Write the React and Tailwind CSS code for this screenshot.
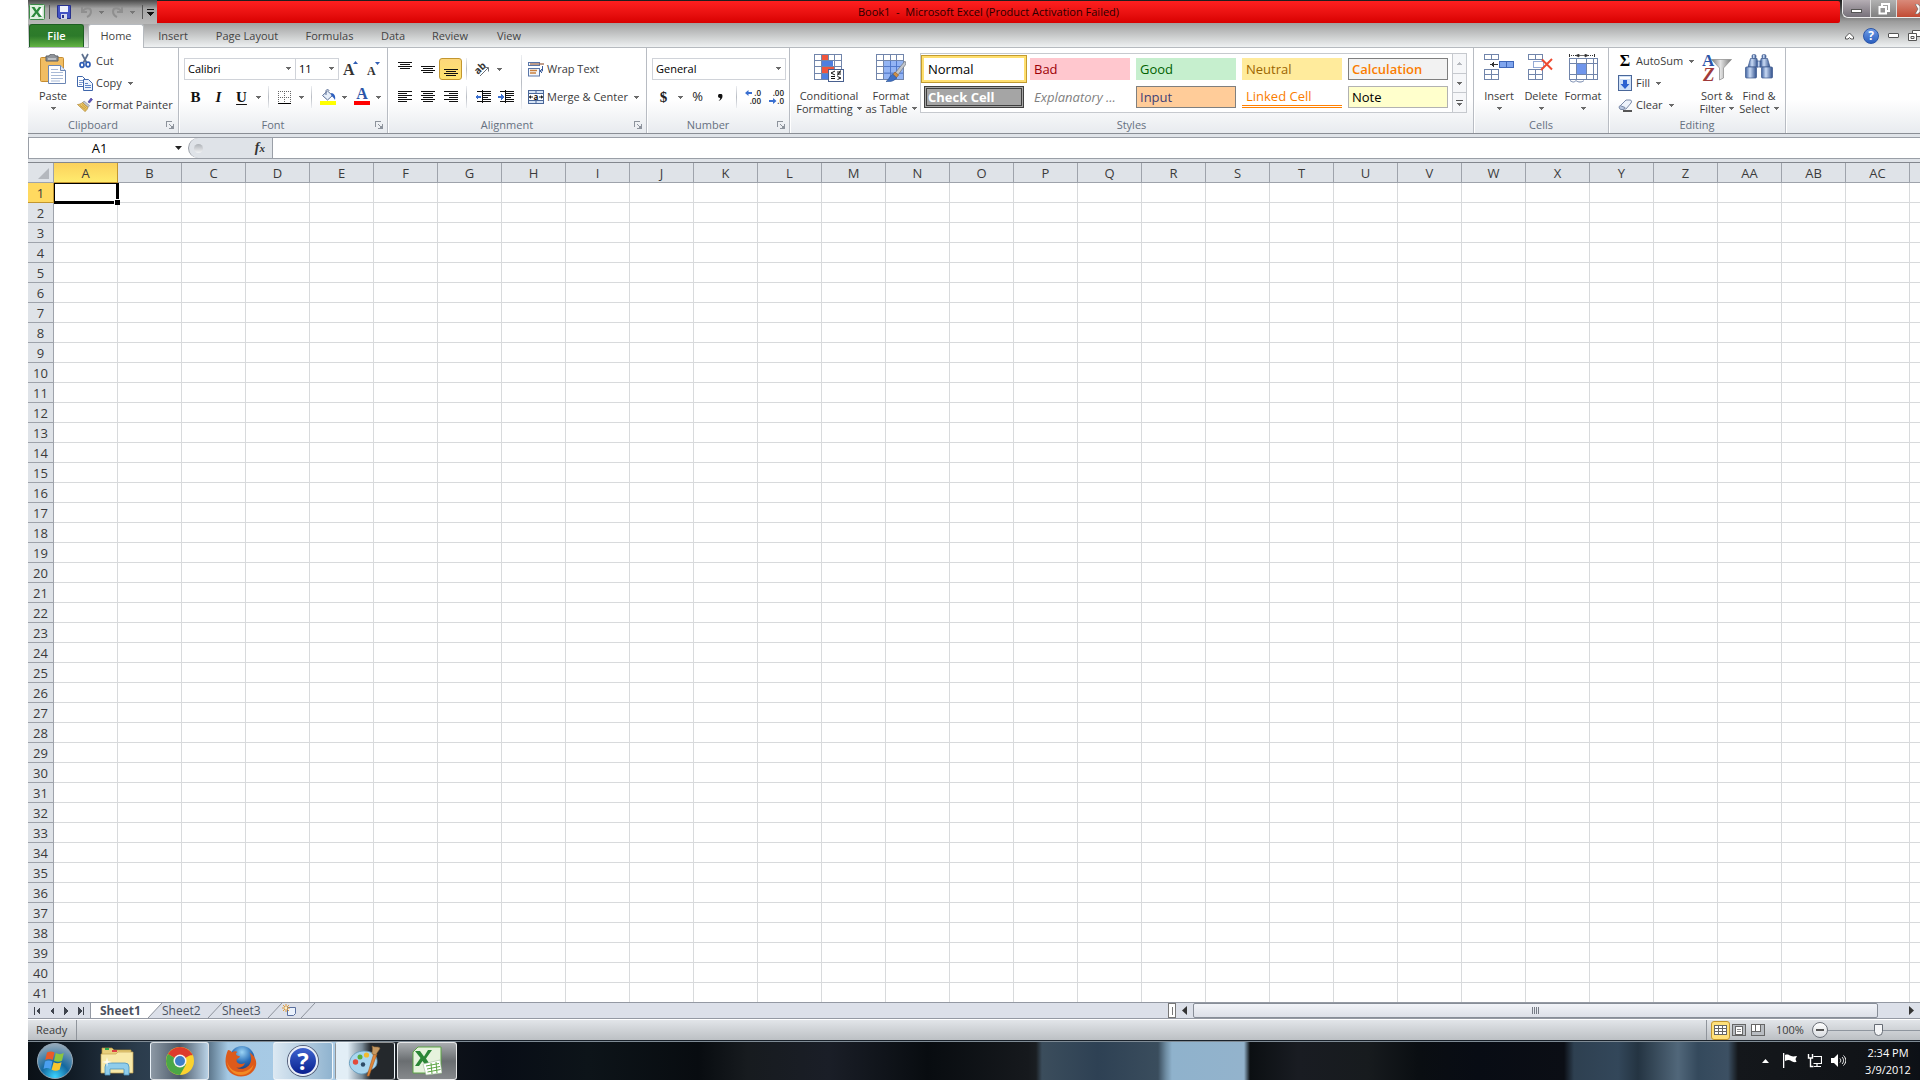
import clsx from 'clsx';

const columns = [
    'A', 'B', 'C', 'D', 'E', 'F', 'G', 'H', 'I', 'J', 'K', 'L', 'M', 'N', 'O',
    'P', 'Q', 'R', 'S', 'T', 'U', 'V', 'W', 'X', 'Y', 'Z', 'AA', 'AB', 'AC', '',
];
const rows = Array.from({ length: 41 }, (_, i) => i + 1);

const tabs = [
    { name: 'Insert', width: 'w-[58px]' },
    { name: 'Page Layout', width: 'w-[90px]' },
    { name: 'Formulas', width: 'w-[75px]' },
    { name: 'Data', width: 'w-[52px]' },
    { name: 'Review', width: 'w-[62px]' },
    { name: 'View', width: 'w-[56px]' },
];

const cellStyles = [
    { name: 'Normal', className: 'bg-white text-black shadow-[0_0_0_2px_#ffdf6f,0_0_0_3px_#c29b2f]' },
    { name: 'Bad', className: 'bg-[#ffc7ce] text-[#9c0006]' },
    { name: 'Good', className: 'bg-[#c6efce] text-[#006100]' },
    { name: 'Neutral', className: 'bg-[#ffeb9c] text-[#9c6500]' },
    { name: 'Calculation', className: 'bg-[#f2f2f2] font-semibold text-[#fa7d00] outline outline-[#7f7f7f] -outline-offset-1' },
    { name: 'Check Cell', className: 'bg-[#a5a5a5] font-bold text-white outline-[3px] outline-[#3f3f3f] outline-double -outline-offset-3' },
    { name: 'Explanatory ...', className: 'bg-white italic text-[#7f7f7f]' },
    { name: 'Input', className: 'bg-[#ffcc99] text-[#3f3f76] outline outline-[#7f7f7f] -outline-offset-1' },
    { name: 'Linked Cell', className: 'border-b-[3px] border-double border-[#ff8001] bg-white text-[#fa7d00]' },
    { name: 'Note', className: 'bg-[#ffffcc] text-black outline outline-[#b2b2b2] -outline-offset-1' },
];

/* ---------- small pieces ---------- */

function Arrow({ className = 'text-[#6a6a6a]' }) {
    return (
        <svg viewBox="0 0 5 3" className={clsx('h-[3px] w-[5px] shrink-0', className)} fill="currentColor" shapeRendering="crispEdges">
            <path d="M0 0h5L2.5 3z" />
        </svg>
    );
}

function Sep({ className = 'h-[22px]' }) {
    return <span className={clsx('mx-1 w-px shrink-0 bg-linear-to-b from-[#eceef1] via-[#b9bdc4] to-[#eceef1]', className)} />;
}

function Tool({ label, active, children }) {
    return (
        <button
            type="button"
            aria-label={label}
            className={clsx(
                'flex h-[22px] w-[23px] shrink-0 items-center justify-center',
                active && 'rounded-[3px] border border-[#c2962f] bg-linear-to-b from-[#fdd77a] to-[#ffe46e]',
            )}
        >
            {children}
        </button>
    );
}

function Drop({ label }) {
    return (
        <button type="button" aria-label={label} className="flex h-[22px] w-[11px] shrink-0 items-center justify-center">
            <Arrow />
        </button>
    );
}

function SmallButton({ icon, label, arrow }) {
    return (
        <button type="button" className="flex h-[22px] items-center gap-[3px] whitespace-nowrap">
            <span className="flex h-4 w-4 items-center justify-center">{icon}</span>
            <span>{label}</span>
            {arrow && <Arrow className="ml-[3px] text-[#6a6a6a]" />}
        </button>
    );
}

function BigButton({ icon, lines, className = 'w-[42px]' }) {
    return (
        <button type="button" className={clsx('flex shrink-0 flex-col items-center pt-[6px] leading-[13px]', className)}>
            <span className="mb-[3px] flex h-8 items-start justify-center">{icon}</span>
            <span className="whitespace-nowrap">{lines[0]}</span>
            <span className="flex h-[13px] items-center gap-1 whitespace-nowrap">
                {lines[1]}
                <Arrow />
            </span>
        </button>
    );
}

function Group({ title, launcher, className, children }) {
    return (
        <section aria-label={title} className={clsx('relative flex shrink-0 flex-col border-r border-[#b8bcc3] shadow-[1px_0_0_#fff]', className)}>
            <div className="flex h-[68px]">{children}</div>
            <div className={clsx('h-[17px] text-center leading-[17px] text-[#66707f]', launcher && 'pr-5')}>{title}</div>
            {launcher && (
                <button type="button" aria-label={`${title} options`} className="absolute right-1 bottom-1">
                    <svg viewBox="0 0 8 8" className="h-2 w-2" fill="none" stroke="#8d939c" shapeRendering="crispEdges">
                        <path d="M.5 6V.5H6M3 3l3 3M7.5 3v4.5H3" />
                        <path d="M5 5h2v2H5z" fill="#8d939c" />
                    </svg>
                </button>
            )}
        </section>
    );
}

function Combo({ label, value, className }) {
    return (
        <div className={clsx('relative h-[22px] shrink-0', className)}>
            <select aria-label={label} className="h-full w-full appearance-none border border-[#d0d3d9] bg-white pl-[3px] text-black">
                <option>{value}</option>
            </select>
            <Arrow className="pointer-events-none absolute top-[9px] right-[5px] text-[#6a6a6a]" />
        </div>
    );
}

/* ---------- ribbon icons ---------- */

function PasteIcon() {
    return (
        <svg viewBox="0 0 28 31" className="h-[31px] w-7">
            <rect x="1.5" y="3.5" width="23" height="24" rx="1" fill="#f1bd62" stroke="#c58d33" />
            <path d="M7 2h3c.5-2.5 6-2.5 6.5 0H19v5H7z" fill="#8f9399" stroke="#5d6167" />
            <path d="M9 5h8" stroke="#e8eaec" />
            <path d="M9.5 11.5h12l5 5v13h-17z" fill="#fff" stroke="#6b86b4" />
            <path d="M21.5 11.5v5h5" fill="#dbe6f5" stroke="#6b86b4" />
            <path d="M12 15.5h7M12 18.5h12M12 21.5h12M12 24.5h12M12 27h9" stroke="#a9bad6" />
        </svg>
    );
}

function CutIcon() {
    return (
        <svg viewBox="0 0 16 16" className="h-4 w-4" fill="none">
            <path d="M5 1l4.500 8.500M11 1L6.500 9.500" stroke="#5d708f" strokeWidth="1.700" />
            <ellipse cx="5" cy="12" rx="2" ry="2.300" stroke="#2f5db5" strokeWidth="1.700" />
            <ellipse cx="11" cy="11.500" rx="2" ry="2.300" stroke="#2f5db5" strokeWidth="1.700" />
        </svg>
    );
}

function CopyIcon() {
    return (
        <svg viewBox="0 0 16 16" className="h-4 w-4" fill="#fff" stroke="#3f66ab">
            <path d="M.5 1.500h5l3 3v7h-8z" />
            <path d="M2 5.500h4M2 7.500h4M2 9.500h3" stroke="#7d9bd0" />
            <path d="M6.500 4.500h5l4 4v7h-9z" fill="#eef4fd" />
            <path d="M8 8.500h3M8 10.500h6M8 12.500h6" stroke="#5c83c6" />
        </svg>
    );
}

function PainterIcon() {
    return (
        <svg viewBox="0 0 16 16" className="h-4 w-4">
            <path d="M11 5l3-4 1.500 1.500L12.500 6z" fill="#5a52b8" stroke="#423b94" strokeWidth=".6" />
            <path d="M7 4l5.500 4.500-1.500 2L5.500 6z" fill="#c4c8cf" stroke="#80858d" strokeWidth=".6" />
            <path d="M5.500 5.500C4 7 2 7.500.5 7.500L8 14.500c1.500-1 2.500-2.500 3-4z" fill="#edc766" stroke="#a97e2a" strokeWidth=".7" />
            <path d="M3 8.500l5.500 4M5 7.500l4.500 4" stroke="#a97e2a" strokeWidth=".6" />
        </svg>
    );
}

function Lines({ widths, align = 'left', y = 0 }) {
    return (
        <svg viewBox="0 0 14 14" className="h-[14px] w-[14px]" shapeRendering="crispEdges">
            {widths.map((w, i) => (
                <rect key={i} x={align === 'left' ? 0 : align === 'center' ? (14 - w) / 2 : 14 - w} y={y + i * 2} width={w} height="1" fill="#111" />
            ))}
        </svg>
    );
}

function IndentIcon({ flip }) {
    return (
        <svg viewBox="0 0 16 14" className="h-[14px] w-4" shapeRendering="crispEdges">
            <path d="M2 1.500h14M7 3.500h9M2 11.500h14" stroke="#111" />
            <path d="M7 5.500h9M7 7.500h6M7 9.500h9" stroke="#111" />
            <path d="M7.500 0v14" stroke="#111" strokeDasharray="1 1" />
            <path d={flip ? 'M0 6h3V4l3 3-3 3V8H0z' : 'M6 6H3V4L0 7l3 3V8h3z'} fill="#3a6fd0" />
        </svg>
    );
}

function OrientationIcon() {
    return (
        <svg viewBox="0 0 17 16" className="h-4 w-[17px] overflow-visible">
            <text x="1" y="11" fontSize="10" fontWeight="bold" fill="#333" transform="rotate(-45 6 9)">ab</text>
            <path d="M6 15L14 7M10.500 6.500H14.500V10.500" fill="none" stroke="#6c7078" />
        </svg>
    );
}

function WrapIcon() {
    return (
        <svg viewBox="0 0 16 16" className="h-4 w-4" fill="none">
            <rect x=".5" y="1.500" width="11" height="3" fill="#f4f8fd" stroke="#5a76a8" />
            <path d="M2 3h14" stroke="#a06a4d" strokeWidth="1.300" />
            <rect x=".5" y="7.500" width="11" height="7.500" fill="#f4f8fd" stroke="#5a76a8" />
            <path d="M2 9.500h7M2 12h6" stroke="#c9803f" strokeWidth="1.300" />
            <path d="M14.500 5v5h-2M14 8l-2 2 2 2" stroke="#3c5e9c" />
        </svg>
    );
}

function MergeIcon() {
    return (
        <svg viewBox="0 0 16 16" className="h-4 w-4">
            <rect x=".5" y="1.500" width="15" height="13" fill="#d8e5f6" stroke="#4a6799" />
            <path d="M0 4.500h16M0 11.500h16M8 1v3M8 12v3" stroke="#4a6799" />
            <rect x="1" y="5" width="14" height="6" fill="#fff" />
            <path d="M1 8h4M11 8h4" stroke="#222" />
            <path d="M3 6v4L1 8zM13 6v4l2-2z" fill="#222" />
            <text x="8" y="10.500" textAnchor="middle" fontSize="8" fontWeight="bold" fill="#111">a</text>
        </svg>
    );
}

function DecimalIcon({ decrease }) {
    return (
        <svg viewBox="0 0 16 14" className="h-[14px] w-4 overflow-visible" fontSize="8" fontWeight="600" fill="#222">
            <text x="16" y="6" textAnchor="end">{decrease ? '.00' : '.0'}</text>
            <text x="16" y="14" textAnchor="end">{decrease ? '.0' : '.00'}</text>
            {decrease ? (
                <path d="M1 10h4V8l3.500 3L5 14v-2H1z" fill="#3a6fd0" />
            ) : (
                <path d="M7 2H3.500V0L0 3l3.500 3V4H7z" fill="#3a6fd0" />
            )}
        </svg>
    );
}

function GridBase() {
    return (
        <g stroke="#7185ab" shapeRendering="crispEdges">
            <rect x=".5" y=".5" width="27" height="25" fill="#fff" />
            <path d="M7.500 0v25M14.500 0v25M20.500 0v25M0 6.500h27M0 12.500h27M0 19.500h27" />
        </g>
    );
}

function ConditionalIcon() {
    return (
        <svg viewBox="0 0 30 28" className="h-7 w-[30px] overflow-visible">
            <GridBase />
            <path d="M8 1h6v5H8zM8 13h12v6H8z" fill="#f0553c" />
            <path d="M8 7h11v5H8zM8 20h6v5H8z" fill="#4f7fe0" />
            <rect x="14.500" y="15.500" width="15" height="12" fill="#fff" stroke="#49608f" />
            <path d="M21 17l-4 2 4 2M17 22.500h4M17 24.500h4M23 18h4M23 20h4M26.500 16.500l-3 5M23.500 22.500l3.500 1.500-3.500 1.500" fill="none" stroke="#111" />
        </svg>
    );
}

function FormatTableIcon() {
    return (
        <svg viewBox="0 0 30 28" className="h-7 w-[30px]">
            <GridBase />
            <path d="M8 7h19v18H8z" fill="#6f9bf0" opacity=".75" />
            <path d="M8 12.500h19M8 19h19M14.500 7v18M20.500 7v18" stroke="#4b74c8" strokeWidth=".8" />
            <path d="M29 7l1 3-8 11-3-2z" fill="#c2c6cc" stroke="#70757d" strokeWidth=".7" />
            <path d="M19 18l3.500 3-2 2.500-3.500-3z" fill="#d09048" stroke="#8e5b22" strokeWidth=".6" />
            <path d="M16.500 20l4 4c-2 3-6 4-10.500 3.500 3-1.500 3-5 6.500-7.500z" fill="#3f6fc4" stroke="#28508f" strokeWidth=".6" />
        </svg>
    );
}

function InsertIcon() {
    return (
        <svg viewBox="0 0 31 28" className="h-7 w-[31px]" fill="#fff" stroke="#7185ab" shapeRendering="crispEdges">
            <path d="M.5.500h14v5H.5zM7.500.5v5M.5 15.500h14v10H.5zM7.500 15.500v10M.5 20.500h14" />
            <path d="M15.500 7.500h14v6h-14zM22.500 7.500v6" fill="#7fa5ee" stroke="#3e66b8" />
            <path d="M7 10.500h7" stroke="#333" />
            <path d="M10 8v5l-4-2.500z" fill="#333" stroke="none" />
        </svg>
    );
}

function DeleteIcon() {
    return (
        <svg viewBox="0 0 26 28" className="h-7 w-[26px]" fill="#fff" stroke="#7185ab">
            <path shapeRendering="crispEdges" d="M.5.500h14v5H.5zM7.500.5v5M.5 15.500h14v10H.5zM7.500 15.500v10M.5 20.500h14" />
            <path d="M5.500 7.500h10v6h-10z" strokeDasharray="1 1" stroke="#2b54a8" />
            <path d="M14 5.500l10 10M24 5L13 16" stroke="#ee4a30" strokeWidth="2" fill="none" />
        </svg>
    );
}

function FormatIcon() {
    return (
        <svg viewBox="0 0 31 29" className="h-[29px] w-[31px]">
            <path d="M1.500 0v3M26.500 0v3" stroke="#333" />
            <path d="M3 1.500h6M20 1.500h6" stroke="#333" strokeDasharray="1 1" />
            <path d="M9 1.500h10M11 0L8 1.500l3 1.500zM17 0l3 1.500L17 3z" stroke="#333" fill="#333" strokeWidth=".7" />
            <g stroke="#7185ab" fill="#fff" shapeRendering="crispEdges">
                <rect x="1.500" y="4.500" width="28" height="21" />
                <path d="M8.500 4v21M18.500 4v21M25.500 4v21M1 9.500h28M1 20.500h28" />
                <rect x="9" y="10" width="9" height="10" fill="#7096ec" stroke="none" />
            </g>
            <path d="M2 26.500c3 2 4 2 6 0 2 2 6 2 8 0" fill="none" stroke="#7185ab" />
        </svg>
    );
}

function FillIcon() {
    return (
        <svg viewBox="0 0 14 16" className="h-4 w-[14px]">
            <rect x=".5" y=".5" width="13" height="15" fill="#cfe0f7" stroke="#4a6799" />
            <rect x="2" y="2" width="10" height="2" fill="#fff" />
            <path d="M5 5h4v4h2.500L7 14 2.500 9H5z" fill="#2d62d0" />
        </svg>
    );
}

function EraserIcon() {
    return (
        <svg viewBox="0 0 16 14" className="h-[14px] w-4">
            <path d="M6 13h9" stroke="#111" strokeWidth="1.400" />
            <path d="M9 2h4c1.500 0 2 1.500 1 3l-5 6H5c-2 0-3-1.500-2-3z" fill="#eef3fb" stroke="#7b8aa8" />
            <path d="M3 7.500L8 9.500 6.500 11.500H4C2 11 1.500 9 3 7.500z" fill="#b9c8e2" stroke="#7b8aa8" />
        </svg>
    );
}

function SortFilterIcon() {
    return (
        <svg viewBox="0 0 30 28" className="h-7 w-[30px] overflow-visible font-['Liberation_Serif',serif]">
            <defs>
                <linearGradient id="funnel" x1="0" x2="1">
                    <stop offset="0" stopColor="#7b7b7b" />
                    <stop offset=".45" stopColor="#e3e3e3" />
                    <stop offset="1" stopColor="#777" />
                </linearGradient>
            </defs>
            <path d="M9.500 5.500h20L21.500 14v10l-4 2V14z" fill="url(#funnel)" stroke="#8a8a8a" strokeWidth=".7" />
            <text x="0" y="12" fontSize="17" fontWeight="bold" fill="#2c55a8">A</text>
            <text x="1" y="27" fontSize="19" fontWeight="bold" fontStyle="italic" fill="#a03a3a">Z</text>
        </svg>
    );
}

function BinocularsIcon() {
    return (
        <svg viewBox="0 0 28 26" className="h-[26px] w-7">
            <defs>
                <linearGradient id="lens" x1="0" x2="1">
                    <stop offset="0" stopColor="#3c5f9e" />
                    <stop offset=".4" stopColor="#c9daf4" />
                    <stop offset="1" stopColor="#2f4f8b" />
                </linearGradient>
            </defs>
            <g fill="url(#lens)" stroke="#3b588d" strokeWidth=".7">
                <rect x="7" y=".5" width="4" height="4" rx="1.500" />
                <rect x="17" y=".5" width="4" height="4" rx="1.500" />
                <path d="M5.500 4.500h6.500L13 13H3z" />
                <path d="M16 4.500h6.500L25 13H15z" />
                <rect x="12" y="7" width="4" height="6" />
                <rect x=".5" y="13" width="11" height="11" rx="1" />
                <rect x="16.500" y="13" width="11" height="11" rx="1" />
            </g>
        </svg>
    );
}

function ExcelMark({ className }) {
    return (
        <svg viewBox="0 0 16 16" className={className}>
            <rect x=".5" y=".5" width="15" height="15" rx="1" fill="#dff0df" stroke="#3c8a48" />
            <path d="M10 2h4v12h-4z" fill="#fff" stroke="#9fcaa5" strokeWidth=".5" />
            <path d="M2.500 3h3l2 3.200L10 3h2.500L9 8l4 5h-3.200L7.400 9.600 5 13H2l4-5z" fill="#2c8a3c" />
        </svg>
    );
}

/* ---------- window sections ---------- */

function TitleBar() {
    return (
        <div className="flex h-6 items-start">
            <div className="flex h-6 w-[129px] shrink-0 items-center bg-linear-to-b from-[#4a4a4a] via-[#a3a3a3] via-35% to-[#b9b9b9] pl-px">
                <ExcelMark className="h-4 w-4" />
                <span className="ml-1 h-[14px] w-px bg-[#555]" />
                <button type="button" aria-label="Save" className="ml-[7px]">
                    <svg viewBox="0 0 14 14" className="h-[14px] w-[14px]">
                        <path d="M.5.500h13v13H2L.5 12z" fill="#4353c4" stroke="#27318c" />
                        <path d="M3 1h8v6H3z" fill="#eef2fb" />
                        <path d="M4 9h6v5H4z" fill="#d5daeb" />
                        <path d="M5 10h2v3H5z" fill="#27318c" />
                    </svg>
                </button>
                <button type="button" aria-label="Undo" className="ml-[9px] flex items-center gap-[6px]">
                    <svg viewBox="0 0 13 12" className="h-3 w-[13px]" fill="none" stroke="#8f8f8f" strokeWidth="2">
                        <path d="M2 1v5h5M2.500 5.500C5 1 11 1 11 5.500c0 3-2 4.500-4 5.500" />
                    </svg>
                    <Arrow className="text-[#777]" />
                </button>
                <button type="button" aria-label="Redo" className="ml-[7px] flex items-center gap-[6px]">
                    <svg viewBox="0 0 13 12" className="h-3 w-[13px]" fill="none" stroke="#8f8f8f" strokeWidth="2">
                        <path d="M11 1v5H6M10.500 5.500C8 1 2 1 2 5.500c0 3 2 4.500 4 5.500" />
                    </svg>
                    <Arrow className="text-[#777]" />
                </button>
                <span className="ml-[7px] h-[14px] w-px bg-[#555]" />
                <button type="button" aria-label="Customize Quick Access Toolbar" className="ml-1">
                    <svg viewBox="0 0 7 7" className="h-[7px] w-[7px]" shapeRendering="crispEdges">
                        <path d="M0 0h7v1H0zM0 3h7L3.500 7z" fill="#111" />
                    </svg>
                </button>
            </div>
            <h1 className="mt-px flex h-[22px] flex-1 items-center justify-center rounded-r-xs bg-linear-to-b from-[#ff1f1f] to-[#d80000] pr-5 whitespace-pre text-[#2a0000]">
                Book1  -  Microsoft Excel (Product Activation Failed)
            </h1>
            <div className="flex h-[18px] w-20 shrink-0 justify-end overflow-hidden pl-[2px]">
                <div className="flex flex-1 rounded-bl-md border-b border-l border-[#eee]">
                    <button type="button" aria-label="Minimize" className="flex w-7 items-center justify-center rounded-bl-md border-r border-[#ddd] bg-linear-to-b from-[#b5aeb4] to-[#77717a]">
                        <span className="mt-1 h-1 w-[11px] border border-[#555] bg-white" />
                    </button>
                    <button type="button" aria-label="Restore" className="flex w-[26px] items-center justify-center border-r border-[#ddd] bg-linear-to-b from-[#b2b2b2] to-[#808080]">
                        <svg viewBox="0 0 12 12" className="h-3 w-3" fill="none" stroke="#fff" strokeWidth="2">
                            <path d="M4 3V1h7v7H9" />
                            <path d="M1.500 4h6.500v6.500H1.500z" />
                        </svg>
                    </button>
                    <button type="button" aria-label="Close" className="flex flex-1 items-center justify-end overflow-hidden bg-linear-to-b from-[#d98a7a] to-[#c14a33]">
                        <svg viewBox="0 0 5 10" className="h-[10px] w-[5px]">
                            <path d="M0 0h3l2 2.500v5L3 10H0l3-5z" fill="#fff" stroke="#555" strokeWidth=".6" />
                        </svg>
                    </button>
                </div>
            </div>
        </div>
    );
}

function TabRow() {
    return (
        <nav aria-label="Ribbon tabs" className="flex h-6 border-b border-[#b6babf] text-[#444]">
            <button type="button" className="ml-px w-[55px] rounded-t-[3px] border border-b-0 border-[#1d5f22] bg-linear-to-b from-[#2f7d2b] via-[#2c7a2a] to-[#63b444] font-semibold text-white">
                File
            </button>
            <button type="button" className="-mb-px ml-1 h-6 w-14 rounded-t-[3px] border border-b-0 border-[#b6babf] bg-white">
                Home
            </button>
            {tabs.map((tab) => (
                <button key={tab.name} type="button" className={clsx('pt-[2px]', tab.width)}>
                    {tab.name}
                </button>
            ))}
            <div className="ml-auto flex w-[78px] items-center gap-[9px] overflow-hidden pl-[3px]">
                <button type="button" aria-label="Minimize the Ribbon" className="shrink-0">
                    <svg viewBox="0 0 9 8" className="h-2 w-[9px]" fill="#fff" stroke="#555">
                        <path d="M.5 5L4.500 1l4 4v2H6L4.500 5.500 3 7H.5z" />
                    </svg>
                </button>
                <button type="button" aria-label="Help" className="flex h-4 w-4 shrink-0 items-center justify-center rounded-full border border-[#2a55a8] bg-linear-to-b from-[#6d9be6] to-[#2b5fc0] text-[12px] leading-none font-bold text-white">
                    ?
                </button>
                <button type="button" aria-label="Minimize workbook" className="h-[5px] w-[11px] shrink-0 rounded-[1px] border border-[#555] bg-white" />
                <button type="button" aria-label="Restore workbook" className="shrink-0">
                    <svg viewBox="0 0 13 11" className="h-[11px] w-[13px]" fill="#fff" stroke="#555">
                        <path d="M4.500.5h8v6h-8z" />
                        <path d="M.5 3.500h8v7h-8z" />
                        <path d="M3 6.500h3v2H3z" />
                    </svg>
                </button>
            </div>
        </nav>
    );
}

function Ribbon() {
    return (
        <div className="flex h-[86px] shrink-0 border-b border-[#8a8e95] bg-linear-to-b from-white from-60% to-[#e8ebef] text-[#3b3b3b]">
            <Group title="Clipboard" launcher className="w-[151px]">
                <div className="flex pl-1">
                    <BigButton icon={<PasteIcon />} lines={['Paste', '']} />
                    <div className="flex flex-col items-start pt-[2px] pl-[3px]">
                        <SmallButton icon={<CutIcon />} label="Cut" />
                        <SmallButton icon={<CopyIcon />} label="Copy" arrow />
                        <SmallButton icon={<PainterIcon />} label="Format Painter" />
                    </div>
                </div>
            </Group>

            <Group title="Font" launcher className="w-[209px]">
                <div className="flex flex-col gap-[6px] pt-[10px] pl-[5px]">
                    <div className="flex">
                        <Combo label="Font" value="Calibri" className="w-28" />
                        <Combo label="Font size" value="11" className="-ml-px w-11" />
                        <Tool label="Increase font size">
                            <svg viewBox="0 0 15 15" className="h-[15px] w-[15px] overflow-visible font-['Liberation_Serif',serif]">
                                <text x="0" y="13" fontSize="16" fontWeight="bold" fill="#333">A</text>
                                <path d="M10 2h5l-2.500-3z" fill="#2f5db5" />
                            </svg>
                        </Tool>
                        <Tool label="Decrease font size">
                            <svg viewBox="0 0 13 15" className="h-[15px] w-[13px] overflow-visible font-['Liberation_Serif',serif]">
                                <text x="0" y="13" fontSize="12" fontWeight="bold" fill="#333">A</text>
                                <path d="M8 0h5l-2.500 3z" fill="#2f5db5" />
                            </svg>
                        </Tool>
                    </div>
                    <div className="flex font-['Liberation_Serif',serif] text-[15px] leading-none text-[#111]">
                        <Tool label="Bold"><span className="font-bold">B</span></Tool>
                        <Tool label="Italic"><span className="font-bold italic">I</span></Tool>
                        <Tool label="Underline"><span className="font-bold underline underline-offset-2">U</span></Tool>
                        <Drop label="Underline options" />
                        <Sep />
                        <Tool label="Borders">
                            <svg viewBox="0 0 13 13" className="h-[13px] w-[13px]" shapeRendering="crispEdges" stroke="#666">
                                <path d="M.5 0v12M6.500 0v12M12.500 0v12M0 .5h13M0 6.500h13" strokeDasharray="1 1" />
                                <path d="M0 12.500h13" stroke="#000" />
                            </svg>
                        </Tool>
                        <Drop label="Border options" />
                        <Sep />
                        <Tool label="Fill color">
                            <svg viewBox="0 0 16 16" className="h-4 w-4">
                                <path d="M2.500 6.500l5-4.500 5 4.500-5 4.500z" fill="#e7effa" stroke="#5a6f96" />
                                <path d="M6 6V2c0-2 3-2 3 0" fill="none" stroke="#5a6f96" />
                                <path d="M11 4c3 0 5 3 4 7-1-2-2-3-3.500-4z" fill="#2d5fc0" />
                                <path d="M0 12h16v4H0z" fill="#ff0" />
                            </svg>
                        </Tool>
                        <Drop label="Fill color options" />
                        <Tool label="Font color">
                            <svg viewBox="0 0 16 16" className="h-4 w-4 overflow-visible">
                                <text x="8" y="10" textAnchor="middle" fontSize="16" fontWeight="bold" fill="#2c55a8">A</text>
                                <path d="M0 12h16v4H0z" fill="red" />
                            </svg>
                        </Tool>
                        <Drop label="Font color options" />
                    </div>
                </div>
            </Group>

            <Group title="Alignment" launcher className="w-[259px]">
                <div className="flex flex-col gap-[6px] pt-[10px] pl-[5px]">
                    <div className="flex">
                        <Tool label="Top align"><Lines widths={[14, 10, 14, 10]} align="center" y={0} /></Tool>
                        <Tool label="Middle align"><Lines widths={[14, 10, 14, 10]} align="center" y={4} /></Tool>
                        <Tool label="Bottom align" active><Lines widths={[14, 10, 14, 10]} align="center" y={7} /></Tool>
                        <Sep />
                        <Tool label="Orientation"><OrientationIcon /></Tool>
                        <Drop label="Orientation options" />
                    </div>
                    <div className="flex">
                        <Tool label="Align left"><Lines widths={[14, 9, 14, 9, 14, 9]} y={1} /></Tool>
                        <Tool label="Center"><Lines widths={[14, 10, 14, 10, 14, 10]} align="center" y={1} /></Tool>
                        <Tool label="Align right"><Lines widths={[14, 9, 14, 9, 14, 9]} align="right" y={1} /></Tool>
                        <Sep />
                        <Tool label="Decrease indent"><IndentIcon /></Tool>
                        <Tool label="Increase indent"><IndentIcon flip /></Tool>
                    </div>
                </div>
                <Sep className="mt-[7px] h-[54px]" />
                <div className="flex flex-col items-start gap-[6px] pt-[10px] pl-[2px]">
                    <SmallButton icon={<WrapIcon />} label="Wrap Text" />
                    <SmallButton icon={<MergeIcon />} label="Merge & Center" arrow />
                </div>
            </Group>

            <Group title="Number" launcher className="w-[143px]">
                <div className="flex flex-col gap-[6px] pt-[10px] pl-[5px]">
                    <Combo label="Number format" value="General" className="w-[134px]" />
                    <div className="flex text-[13px] text-[#222]">
                        <Tool label="Accounting format"><span className="font-['Liberation_Serif',serif] text-[15px] font-bold">$</span></Tool>
                        <Drop label="Accounting format options" />
                        <Tool label="Percent style">%</Tool>
                        <Tool label="Comma style">
                            <svg viewBox="0 0 5 7" className="h-[7px] w-[5px]">
                                <path d="M0 2a2 2 0 1 1 4.500 0C4.500 4.500 3 6 .5 7 2 5.500 2.500 4.500 2 4 .8 4 0 3 0 2z" fill="#111" />
                            </svg>
                        </Tool>
                        <Sep />
                        <Tool label="Increase decimal"><DecimalIcon /></Tool>
                        <Tool label="Decrease decimal"><DecimalIcon decrease /></Tool>
                    </div>
                </div>
            </Group>

            <Group title="Styles" className="w-[684px]">
                <div className="flex pl-1">
                    <BigButton icon={<ConditionalIcon />} lines={['Conditional', 'Formatting']} className="w-[70px]" />
                    <BigButton icon={<FormatTableIcon />} lines={['Format', 'as Table']} className="w-[54px]" />
                </div>
                <div className="mt-[5px] ml-[2px] flex h-[60px] w-[547px] border border-[#c6c9ce] bg-white">
                    <div className="grid flex-1 grid-cols-5 content-start gap-[6px] pt-1 pr-1 pl-[3px]">
                        {cellStyles.map((style) => (
                            <button
                                key={style.name}
                                type="button"
                                className={clsx('flex h-[22px] items-center pl-1 text-[13px] leading-4 whitespace-nowrap', style.className)}
                            >
                                {style.name}
                            </button>
                        ))}
                    </div>
                    <div className="flex w-[14px] flex-col divide-y divide-[#c6c9ce] border-l border-[#c6c9ce] bg-[#f6f7f9]">
                        <button type="button" aria-label="Previous styles" className="flex flex-1 items-center justify-center">
                            <Arrow className="rotate-180 text-[#b5b8bd]" />
                        </button>
                        <button type="button" aria-label="Next styles" className="flex flex-1 items-center justify-center">
                            <Arrow />
                        </button>
                        <button type="button" aria-label="More styles" className="flex flex-1 flex-col items-center justify-center gap-[2px]">
                            <span className="h-px w-[7px] bg-[#555]" />
                            <Arrow />
                        </button>
                    </div>
                </div>
            </Group>

            <Group title="Cells" className="w-[135px]">
                <div className="flex pl-1">
                    <BigButton icon={<InsertIcon />} lines={['Insert', '']} />
                    <BigButton icon={<DeleteIcon />} lines={['Delete', '']} />
                    <BigButton icon={<FormatIcon />} lines={['Format', '']} />
                </div>
            </Group>

            <Group title="Editing" className="w-[177px]">
                <div className="flex w-[87px] flex-col items-start pt-[2px] pl-2">
                    <SmallButton
                        icon={<span className="font-['Liberation_Serif',serif] text-[16px] leading-none font-bold text-black">Σ</span>}
                        label="AutoSum"
                        arrow
                    />
                    <SmallButton icon={<FillIcon />} label="Fill" arrow />
                    <SmallButton icon={<EraserIcon />} label="Clear" arrow />
                </div>
                <BigButton icon={<SortFilterIcon />} lines={['Sort &', 'Filter']} />
                <BigButton icon={<BinocularsIcon />} lines={['Find &', 'Select']} />
            </Group>
        </div>
    );
}

function FormulaBar() {
    return (
        <div className="flex h-[29px] shrink-0 flex-col border-b border-[#83878e] bg-[#dfe3e8] pt-[3px]">
            <div className="flex h-[22px] border-y border-[#9a9fa7] bg-white">
                <div className="relative flex w-40 shrink-0 items-center border-l border-[#9a9fa7]">
                    <input aria-label="Name box" defaultValue="A1" className="w-full pt-px pr-[18px] text-center text-[13px] text-black" />
                    <svg viewBox="0 0 7 4" className="pointer-events-none absolute right-[6px] h-1 w-[7px]">
                        <path d="M0 0h7L3.500 4z" fill="#222" />
                    </svg>
                </div>
                <div className="flex w-[85px] shrink-0 items-center justify-between rounded-l-full border-r border-l border-[#9a9fa7] bg-[#dfe3e8] pr-[7px] pl-[5px]">
                    <span className="h-[9px] w-[9px] rounded-full bg-linear-to-b from-[#aeb2b7] to-[#f3f4f6]" />
                    <button type="button" aria-label="Insert function" className="font-['Liberation_Serif',serif] text-[14px] leading-none font-bold text-[#333] italic">
                        f<span className="text-[11px]">x</span>
                    </button>
                </div>
                <input aria-label="Formula" className="min-w-0 flex-1 px-1" />
            </div>
        </div>
    );
}

function Sheet() {
    return (
        <main className="min-h-0 flex-1 overflow-hidden bg-white">
            <table className="w-max table-fixed border-separate border-spacing-0 text-[13px] leading-none text-[#3b3b3b]">
                <thead>
                    <tr className="h-5">
                        <th className="h-5 w-[26px] border-r border-b border-[#9ea3ab] bg-[#dfe3e8] p-0">
                            <svg viewBox="0 0 11 11" className="mt-px ml-[10px] h-[11px] w-[11px]">
                                <path d="M11 0v11H0z" fill="#b4b8be" />
                            </svg>
                        </th>
                        {columns.map((col, i) => (
                            <th
                                key={i}
                                scope="col"
                                className={clsx(
                                    'h-5 w-16 border-r border-b p-0 pt-[2px] font-normal',
                                    i === 0 ? 'border-[#c2962f] bg-linear-to-b from-[#fbd15c] to-[#ffeb6e]' : 'border-[#9ea3ab] bg-[#dfe3e8]',
                                )}
                            >
                                {col}
                            </th>
                        ))}
                    </tr>
                </thead>
                <tbody>
                    {rows.map((row) => (
                        <tr key={row} className="h-5">
                            <th
                                scope="row"
                                className={clsx(
                                    'h-5 border-r border-b p-0 pt-[2px] font-normal',
                                    row === 1 ? 'border-[#c2962f] bg-[#ffd960]' : 'border-[#9ea3ab] bg-[#dfe3e8]',
                                )}
                            >
                                {row}
                            </th>
                            {columns.map((_, i) => (
                                <td key={i} className="relative border-r border-b border-[#d8dadc] p-0">
                                    {row === 1 && i === 0 && (
                                        <span className="absolute top-0 -right-[2px] -bottom-[2px] left-0 z-10 border-t border-r-[3px] border-b-[3px] border-l border-black">
                                            <span className="absolute -right-1 -bottom-1 h-[6px] w-[6px] border-t border-l border-white bg-black" />
                                        </span>
                                    )}
                                </td>
                            ))}
                        </tr>
                    ))}
                </tbody>
            </table>
        </main>
    );
}

function Slant({ active }) {
    return (
        <svg viewBox="0 0 14 15" className="h-[15px] w-[14px] shrink-0">
            {active && <path d="M0 0h14L0 15z" fill="#fff" />}
            <path d="M0 15L14 0" stroke="#8d929b" />
        </svg>
    );
}

function SheetTabs() {
    const nav = [
        { label: 'First sheet', d: 'M1 0h1v8H1zM7 0v8L3 4z' },
        { label: 'Previous sheet', d: 'M6 0v8L2 4z' },
        { label: 'Next sheet', d: 'M2 0v8l4-4z' },
        { label: 'Last sheet', d: 'M1 0v8l4-4zM6 0h1v8H6z' },
    ];
    return (
        <div className="flex h-[17px] shrink-0 border-y border-[#9499a3] bg-[#dce0e9]">
            <div className="flex w-[63px] shrink-0 items-center justify-around border-r border-[#9499a3] px-[2px]">
                {nav.map((item) => (
                    <button key={item.label} type="button" aria-label={item.label}>
                        <svg viewBox="0 0 8 8" className="h-2 w-2" fill="#3f444d" shapeRendering="crispEdges">
                            <path d={item.d} />
                        </svg>
                    </button>
                ))}
            </div>
            <div className="flex text-[12px] leading-[15px] text-[#4b5260]">
                <button type="button" className="w-[57px] bg-white pl-[9px] text-left font-bold">Sheet1</button>
                <Slant active />
                <button type="button" className="w-[46px] text-left">Sheet2</button>
                <Slant />
                <button type="button" className="w-[46px] text-left">Sheet3</button>
                <Slant />
                <button type="button" aria-label="Insert worksheet" className="flex w-[19px] items-center">
                    <svg viewBox="0 0 14 13" className="h-[13px] w-[14px]">
                        <path d="M5.500 3.500h8v6l-2 2h-6z" fill="#eaf1fb" stroke="#5a6f9e" />
                        <path d="M4 0v8M0 4h8M1 1l6 6M7 1L1 7" stroke="#e09a3a" />
                        <circle cx="4" cy="4" r="1.200" fill="#fff3c4" />
                    </svg>
                </button>
                <Slant />
            </div>
            <div className="ml-auto flex w-[752px] items-center">
                <span className="flex h-[15px] w-2 items-center justify-center border border-[#777] bg-white">
                    <span className="h-2 w-px bg-[#777]" />
                </span>
                <button type="button" aria-label="Scroll left" className="flex w-[17px] items-center justify-center">
                    <svg viewBox="0 0 5 9" className="h-[9px] w-[5px]"><path d="M5 0v9L0 4.500z" fill="#333" /></svg>
                </button>
                <div className="flex h-[15px] w-[685px] items-center justify-center gap-px rounded-xs border border-[#878d97] bg-linear-to-b from-[#f1f3f8] to-[#dde0e8]">
                    {[0, 1, 2, 3].map((i) => (
                        <span key={i} className="h-[7px] w-px bg-[#777c86]" />
                    ))}
                </div>
                <button type="button" aria-label="Scroll right" className="ml-auto mr-[6px]">
                    <svg viewBox="0 0 5 9" className="h-[9px] w-[5px]"><path d="M0 0v9l5-4.500z" fill="#333" /></svg>
                </button>
            </div>
        </div>
    );
}

function StatusBar() {
    return (
        <div className="flex h-[21px] shrink-0 items-center overflow-hidden border-t border-white bg-linear-to-b from-[#e2e5e9] to-[#bcc0c4] text-[#3b3b3b]">
            <span className="w-12 pl-2 leading-4">Ready</span>
            <span className="h-5 w-px bg-[#8f949b]" />
            <div className="ml-auto flex w-[214px] items-center">
                <span className="h-5 w-px shrink-0 bg-[#8f949b]" />
                <button type="button" aria-label="Normal view" className="ml-1 flex h-[19px] w-[19px] shrink-0 items-center justify-center rounded-[3px] border border-[#c2962f] bg-[#ffe07a]">
                    <svg viewBox="0 0 13 10" className="h-[10px] w-[13px]" shapeRendering="crispEdges">
                        <path d="M.5.500h12v9H.5zM4.500 0v10M8.500 0v10M0 3.500h13M0 6.500h13" fill="#fff" stroke="#666" />
                    </svg>
                </button>
                <button type="button" aria-label="Page layout view" className="ml-[2px] shrink-0">
                    <svg viewBox="0 0 14 12" className="h-3 w-[14px]" shapeRendering="crispEdges">
                        <path d="M.5.500h13v11H.5z" fill="#b9bdc2" stroke="#666" />
                        <path d="M3.500 2.500h7v8h-7z" fill="#fff" stroke="#666" />
                        <path d="M5 5.500h4M5 7.500h4" stroke="#888" />
                    </svg>
                </button>
                <button type="button" aria-label="Page break preview" className="ml-[5px] shrink-0">
                    <svg viewBox="0 0 14 12" className="h-3 w-[14px]" shapeRendering="crispEdges">
                        <path d="M.5.500h13v11H.5z" fill="#b9bdc2" stroke="#666" />
                        <path d="M1 1h8v6H1z" fill="#fff" />
                        <path d="M4.500 0v7M9.500 0v7M0 7.500h10" stroke="#666" />
                    </svg>
                </button>
                <span className="ml-[11px] w-[30px] shrink-0">100%</span>
                <button type="button" aria-label="Zoom out" className="ml-[6px] flex h-4 w-4 shrink-0 items-center justify-center rounded-full border border-[#6d727a] bg-linear-to-b from-white to-[#d9dce0]">
                    <span className="h-[2px] w-2 bg-[#555]" />
                </button>
                <input
                    type="range"
                    aria-label="Zoom"
                    defaultValue="50"
                    className="h-3 w-[100px] shrink-0 appearance-none bg-[linear-gradient(#8f969f,#8f969f)] bg-size-[100%_1px] bg-center bg-no-repeat [&::-webkit-slider-thumb]:h-3 [&::-webkit-slider-thumb]:w-[9px] [&::-webkit-slider-thumb]:appearance-none [&::-webkit-slider-thumb]:rounded-b-full [&::-webkit-slider-thumb]:border [&::-webkit-slider-thumb]:border-[#666c75] [&::-webkit-slider-thumb]:bg-[#f4f5f7]"
                />
            </div>
        </div>
    );
}

function TaskButton({ label, className, children }) {
    return (
        <button
            type="button"
            aria-label={label}
            className={clsx('flex h-[38px] shrink-0 items-center justify-center', className)}
        >
            {children}
        </button>
    );
}

function Taskbar() {
    return (
        <footer className="flex h-10 shrink-0 items-center border-t border-[#1a222b] bg-[linear-gradient(90deg,#0a1016_0,#101a24_40px,#2b3c4c_110px,#34485a_170px,#a5c9e4_200px,#a9cbe6_300px,#c0d6e6_345px,#12161b_370px,#080d16_470px,#0d1419_560px,#080c10_670px,#171b1f_720px,#1a1e27_800px,#080c10_900px,#16191d_1000px,#1a1e22_1008px,#3b4d5c_1014px,#2e4154_1070px,#3a4d5d_1130px,#6f8da3_1138px,#8fb2cc_1144px,#93b3cc_1216px,#0b0f12_1222px,#191c22_1270px,#171b1e_1340px,#0a0e12_1390px,#080c14_1450px,#0b0e15_1536px,#2e4051_1546px,#33475a_1590px,#243442_1610px,#51677a_1650px,#34495c_1670px,#3c5063_1700px,#14171b_1710px,#101317_1860px,#0c1016_1892px)] text-white shadow-[inset_0_1px_0_#7f8b95]">
            <TaskButton label="Start" className="w-[54px]">
                <svg viewBox="0 0 38 38" className="h-[38px] w-[38px]">
                    <defs>
                        <radialGradient id="orb" cx=".5" cy=".95" r=".9">
                            <stop offset="0" stopColor="#3ad3ff" />
                            <stop offset=".45" stopColor="#14689f" />
                            <stop offset="1" stopColor="#8fa6b8" />
                        </radialGradient>
                    </defs>
                    <circle cx="19" cy="19" r="17.500" fill="url(#orb)" stroke="#97a9b8" />
                    <path d="M11 10.500c3-1.500 5-1.500 7.500 0l-1.800 7.500c-2.500-1.500-5-1.500-7.500 0z" fill="#ea5a28" />
                    <path d="M19.800 11c3 1.500 5 1.500 8 0L26 18.800c-3 1.500-5 1.300-8 0z" fill="#8cc63f" />
                    <path d="M9 19.500c2.500-1.500 5-1.500 7.500 0l-2 7.500c-2.500-1.500-5-1.500-7 0z" fill="#4a9ff0" />
                    <path d="M17.600 20.200c3 1.500 5 1.300 8 0l-2 7.600c-3 1.500-5 1.300-8 0z" fill="#fbc62c" />
                </svg>
            </TaskButton>
            <TaskButton label="Windows Explorer" className="w-[68px] pl-[2px]">
                <svg viewBox="0 0 34 30" className="h-[30px] w-[34px]">
                    <path d="M2 2h10l2 2h17v20H2z" fill="#e9cf7c" stroke="#b5923a" strokeWidth=".7" />
                    <path d="M5 2h4v2H5z" fill="#2fa84f" />
                    <path d="M12 4h5v2h-5z" fill="#d44" />
                    <path d="M20 6h5v2h-5z" fill="#39c" />
                    <path d="M1 8h15l2-2h15v21H1z" fill="#f8e9a9" stroke="#c5a552" strokeWidth=".7" />
                    <path d="M5 29V21q0-4 4-4h16q4 0 4 4v8h-5v-6H10v6z" fill="#8fcdec" stroke="#4b93bd" strokeWidth=".8" />
                    <path d="M7 11l1 4 4 1-4 1-1 4-1-4-4-1 4-1z" fill="#fff" opacity=".8" />
                </svg>
            </TaskButton>
            <TaskButton label="Google Chrome" className="w-[59px] rounded-[3px] border border-white/70 bg-linear-to-r from-[#8d99a5] via-[#4c5a69] to-[#b9d2e6]">
                <svg viewBox="0 0 30 30" className="h-[30px] w-[30px]">
                    <circle cx="15" cy="15" r="14" fill="#fbd22f" />
                    <path d="M15 15L2.900 8A14 14 0 0 1 27.100 8z" fill="#dd3b2c" />
                    <path d="M15 8.500h12.300" stroke="#dd3b2c" strokeWidth="1.500" />
                    <path d="M2.900 8A14 14 0 0 0 15 29l6-10.500-6-3.500z" fill="#4ba746" />
                    <circle cx="15" cy="15" r="6.500" fill="#f4f4f4" />
                    <circle cx="15" cy="15" r="5" fill="#3f7fc7" />
                </svg>
            </TaskButton>
            <TaskButton label="Firefox" className="w-16">
                <svg viewBox="0 0 32 32" className="h-8 w-8">
                    <defs>
                        <radialGradient id="globe" cx=".5" cy=".25" r=".8">
                            <stop offset="0" stopColor="#9bd4f5" />
                            <stop offset=".5" stopColor="#2a6fb8" />
                            <stop offset="1" stopColor="#122e6b" />
                        </radialGradient>
                    </defs>
                    <circle cx="17" cy="13.500" r="12.500" fill="url(#globe)" />
                    <path d="M3 5c2 0 3 1 4 2.500 2-1.500 4-1.500 5.500-.5-2 1-2 2.500-.5 3.500 1 .5 2.500.5 3 1-1 2-3.500 2-3.500 4 0 3.500 5 4.500 8.500 2.500-1 4-6 5.500-9 4.500 6 3.500 14 0 15-7 .5-3-.5-6-1.500-8 5 3 7.500 8 6.500 13C29.500 27 23.500 31.500 16 31.500 7 31.500.5 25 .5 16.500.5 12 1.500 8 3 5z" fill="#dd5a1a" />
                    <path d="M2 16c1 5 4 9 9 10.500 7 2 14-1 17.500-7-1 6-6 10.500-12.500 10.500C8.500 30 2.500 24 2 16z" fill="#f28a25" />
                </svg>
            </TaskButton>
            <TaskButton label="Help" className="w-[60px] rounded-[3px] border border-white/70 bg-linear-to-r from-[#dbe8f2] to-[#8fb3cf]">
                <span className="flex h-[30px] w-[30px] items-center justify-center rounded-full border-2 border-[#e9eef8] bg-linear-to-b from-[#3f63cf] to-[#0b1f8f] text-[24px] leading-none font-bold shadow-[0_0_0_1px_#56607a]">?</span>
            </TaskButton>
            <TaskButton label="Paint" className="ml-[2px] w-[60px] rounded-[3px] border border-white/50 bg-linear-to-r from-[#e2eef6] from-20% via-[#7b8c99] via-45% to-[#24282c] to-60%">
                <svg viewBox="0 0 34 32" className="h-8 w-[34px]">
                    <path d="M16 6c9 0 14 5 13 12-1 6-6 6-8 8-3 3-8 4-12 2-6-3-9-8-7-13C4 9 10 6 16 6z" fill="#a9d6ef" stroke="#5c93b5" strokeWidth=".8" />
                    <circle cx="7.500" cy="17" r="2.700" fill="#e24b3c" />
                    <circle cx="12" cy="12" r="2.500" fill="#57ad3d" />
                    <circle cx="18.500" cy="10" r="2.600" fill="#f2bb2e" />
                    <circle cx="15" cy="19.500" r="2.200" fill="#2c4a66" />
                    <path d="M19 31l7-23 3 1-8 22z" fill="#e0873a" stroke="#a95a1d" strokeWidth=".6" />
                    <path d="M24 1c4 2 6 0 8 2-1 3-3 4-4 7l-4-1c0-3 1-5 0-8z" fill="#c79a63" stroke="#8a6232" strokeWidth=".6" />
                </svg>
            </TaskButton>
            <TaskButton label="Microsoft Excel" className="ml-[2px] w-[60px] rounded-[3px] border border-white/80 bg-linear-to-b from-[#a9acaf] via-[#6a6e71] to-[#86898c]">
                <svg viewBox="0 0 30 30" className="h-[30px] w-[30px]">
                    <path d="M6 1h23v26H1V6z" fill="#e6f3dd" stroke="#5da545" />
                    <path d="M3 5h5l4 5.500L16 4h4l-6 8.500 5 7.500h-5l-3.500-5L7 20H3l5.500-8z" fill="#2b8636" />
                    <path d="M11 18l17-4 2 13-16 2z" fill="#fff" stroke="#9cba97" strokeWidth=".6" />
                    <path d="M14 20l13-2.500M15 23l13-2.500M15.500 26l13-2.500M19 17l1 11M24 16l1 11" stroke="#5da545" />
                </svg>
            </TaskButton>

            <div className="ml-auto flex w-[162px] shrink-0 items-center">
                <button type="button" aria-label="Show hidden icons" className="ml-1">
                    <svg viewBox="0 0 7 4" className="h-1 w-[7px]"><path d="M0 4h7L3.500 0z" fill="#fff" /></svg>
                </button>
                <button type="button" aria-label="Action Center" className="ml-[14px]">
                    <svg viewBox="0 0 15 15" className="h-[15px] w-[15px]" fill="#fff">
                        <path d="M0 0h1.300v15H0zM2 2c2-1 4 0 5 .5S9 4 14 3l-1.500 3 1 3c-3 .5-5-.5-6-1.500S4 7 2 8z" />
                    </svg>
                </button>
                <button type="button" aria-label="Network" className="ml-[9px]">
                    <svg viewBox="0 0 15 15" className="h-[15px] w-[15px]" fill="none" stroke="#fff">
                        <path d="M6.500 3.500h8v7h-8M10 10.500v3M7 13.500h7" strokeWidth="1.200" />
                        <path d="M1.500 1v4h4V1M3.500 5v8.500h3" strokeWidth="1.400" />
                    </svg>
                </button>
                <button type="button" aria-label="Volume" className="ml-[9px]">
                    <svg viewBox="0 0 15 15" className="h-[15px] w-[15px]" fill="none" stroke="#fff">
                        <path d="M0 5h3l4-4v13l-4-4H0z" fill="#fff" stroke="none" />
                        <path d="M9 5.500c1 1 1 3 0 4M11 4c2 2 2 5 0 7M12.500 2.500c3 3 3 7 0 10" />
                    </svg>
                </button>
                <div className="ml-auto w-16 text-center leading-[17px]">
                    <div>2:34 PM</div>
                    <div>3/9/2012</div>
                </div>
            </div>
        </footer>
    );
}

export default function App() {
    return (
        <div className="flex h-screen flex-col overflow-hidden bg-white pl-7 font-['Open_Sans','Noto_Sans',sans-serif] text-[11px] [&_button]:cursor-default">
            <header className="shrink-0 bg-linear-to-b from-[#1c1c1c] via-[#9c9c9c] via-45% to-[#f2f5f6]">
                <TitleBar />
                <TabRow />
            </header>
            <Ribbon />
            <FormulaBar />
            <Sheet />
            <SheetTabs />
            <StatusBar />
            <Taskbar />
        </div>
    );
}
